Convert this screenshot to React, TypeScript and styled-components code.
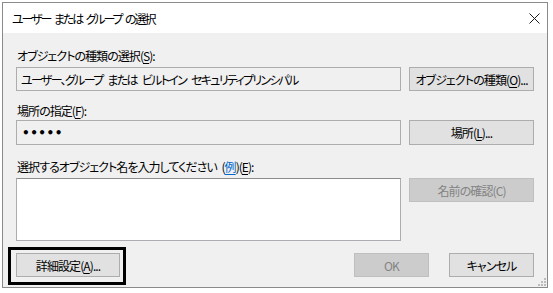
import React from "react";
import styled, { createGlobalStyle } from "styled-components";

const GlobalStyle = createGlobalStyle`
  html, body {
    margin: 0;
    padding: 0;
    background: #ffffff;
  }
  body {
    font-family: "Noto Sans CJK JP", "Noto Sans", sans-serif;
    font-size: 12px;
    color: #000000;
    font-feature-settings: "palt";
  }
`;

const Page = styled.div`
  padding: 2px 0 0 2px;
  width: 553px;
  height: 293px;
  box-sizing: border-box;
`;

const Window = styled.div`
  position: relative;
  width: 546px;
  height: 286px;
  box-sizing: border-box;
  border: 1px solid #8a8a8a;
  background: #f0f0f0;
  display: flex;
  flex-direction: column;
`;

const TitleBar = styled.div`
  height: 30px;
  background: #ffffff;
  display: flex;
  align-items: center;
  justify-content: space-between;
  padding: 0 2px 0 9px;
`;

const Title = styled.span`
  font-size: 12px;
  letter-spacing: -2.1px;
  word-spacing: 3px;
  line-height: 16px;
  padding-top: 1px;
`;

const CloseButton = styled.div`
  width: 22px;
  height: 22px;
  display: flex;
  align-items: center;
  justify-content: center;
`;

const Body = styled.div`
  flex: 1;
  padding: 15px 13px 0 13px;
  display: flex;
  flex-direction: column;
`;

const Label = styled.div<{ $top?: number; $bottom?: number }>`
  height: 16px;
  line-height: 16px;
  padding-left: 1px;
  margin-top: ${(p) => p.$top ?? 0}px;
  margin-bottom: ${(p) => p.$bottom ?? 3}px;
  letter-spacing: -0.95px;
  word-spacing: 3px;
  white-space: pre;
`;

const Key = styled.span`
  text-decoration: underline;
  text-underline-offset: 2px;
`;

const Link = styled.span`
  color: #0066cc;
  text-decoration: underline;
  text-underline-offset: 2px;
`;

const Row = styled.div`
  display: grid;
  grid-template-columns: 385px 125px;
  column-gap: 8px;
  align-items: start;
`;

const Field = styled.div<{ $height: number }>`
  height: ${(p) => p.$height}px;
  box-sizing: border-box;
  border: 1px solid #adadad;
  background: #f0f0f0;
  display: flex;
  align-items: center;
  padding-left: 4px;
  letter-spacing: -1.7px;
  word-spacing: 4px;
  white-space: pre;
  overflow: hidden;
`;

const Dots = styled.span`
  font-size: 12px;
  letter-spacing: 0.5px;
  padding-left: 1px;
  font-weight: bold;
  font-family: "DejaVu Sans", sans-serif;
`;

const TextArea = styled.div`
  height: 63px;
  box-sizing: border-box;
  border: 1px solid #abadb3;
  border-top-color: #8c8c8c;
  background: #ffffff;
`;

const Button = styled.div<{ $width?: number; $height?: number; $disabled?: boolean }>`
  width: ${(p) => (p.$width ? `${p.$width}px` : "auto")};
  height: ${(p) => p.$height ?? 24}px;
  box-sizing: border-box;
  border: 1px solid ${(p) => (p.$disabled ? "#bfbfbf" : "#adadad")};
  background: ${(p) => (p.$disabled ? "#cccccc" : "#e1e1e1")};
  color: ${(p) => (p.$disabled ? "#838383" : "#000000")};
  display: flex;
  align-items: center;
  justify-content: center;
  letter-spacing: -0.9px;
  white-space: nowrap;
`;

const Footer = styled.div`
  margin-top: 12px;
  display: flex;
  align-items: center;
`;

const FooterRight = styled.div`
  margin-left: auto;
  display: flex;
  gap: 20px;
`;

const Highlight = styled.div`
  position: absolute;
  left: 5px;
  top: 244px;
  width: 118px;
  height: 38px;
  box-sizing: border-box;
  border: 3px solid #000000;
  pointer-events: none;
`;

const Grip = styled.svg`
  position: absolute;
  right: 1px;
  bottom: 1px;
`;

export default function App() {
  return (
    <>
      <GlobalStyle />
      <Page>
        <Window>
          <TitleBar>
            <Title>ユーザー または グループ の選択</Title>
            <CloseButton>
              <svg width="11" height="11" viewBox="0 0 11 11">
                <path d="M0.5 0.5 L10.5 10.5 M10.5 0.5 L0.5 10.5" stroke="#1a1a1a" strokeWidth="1" fill="none" />
              </svg>
            </CloseButton>
          </TitleBar>
          <Body>
            <Label>
              オブジェクトの種類の選択(<Key>S</Key>):
            </Label>
            <Row>
              <Field $height={24}>ユーザー、グループ または ビルトイン セキュリティプリンシパル</Field>
              <Button $height={24}>
                オブジェクトの種類(<Key>O</Key>)...
              </Button>
            </Row>
            <Label $top={12} $bottom={1}>
              場所の指定(<Key>F</Key>):
            </Label>
            <Row>
              <Field $height={25}>
                <Dots>•••••</Dots>
              </Field>
              <Button $height={25}>
                場所(<Key>L</Key>)...
              </Button>
            </Row>
            <Label $top={14} $bottom={3}>
              選択するオブジェクト名を入力してください (<Link>例</Link>)(<Key>E</Key>):
            </Label>
            <Row>
              <TextArea />
              <Button $height={24} $disabled>
                名前の確認(C)
              </Button>
            </Row>
            <Footer>
              <Button $width={104}>
                詳細設定(<Key>A</Key>)...
              </Button>
              <FooterRight>
                <Button $width={75} $disabled>
                  OK
                </Button>
                <Button $width={85}>キャンセル</Button>
              </FooterRight>
            </Footer>
          </Body>
          <Highlight />
          <Grip width="8" height="8" viewBox="0 0 8 8">
            <rect x="6" y="0" width="2" height="2" fill="#bcbcbc" />
            <rect x="3" y="3" width="2" height="2" fill="#bcbcbc" />
            <rect x="6" y="3" width="2" height="2" fill="#bcbcbc" />
            <rect x="0" y="6" width="2" height="2" fill="#bcbcbc" />
            <rect x="3" y="6" width="2" height="2" fill="#bcbcbc" />
            <rect x="6" y="6" width="2" height="2" fill="#bcbcbc" />
          </Grip>
        </Window>
      </Page>
    </>
  );
}
